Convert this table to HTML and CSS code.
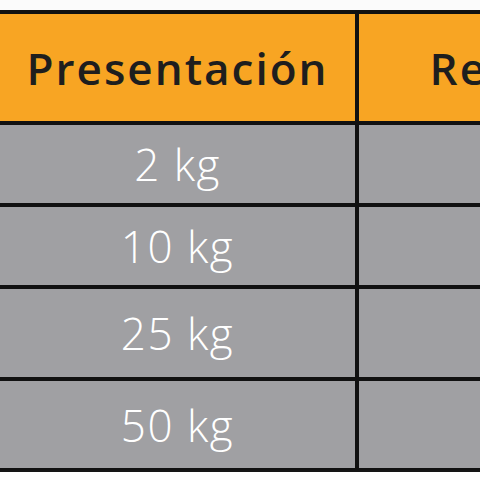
FILE: index.html
```html
<!DOCTYPE html>
<html lang="es">
<head>
<meta charset="utf-8">
<title>Presentación</title>
<link rel="stylesheet" href="styles.css">
</head>
<body>
<div class="table">
  <div class="cell head">Presentación</div>
  <div class="cell head">Rendimiento</div>
  <div class="cell body">2 kg</div>
  <div class="cell body"></div>
  <div class="cell body">10 kg</div>
  <div class="cell body"></div>
  <div class="cell body">25 kg</div>
  <div class="cell body"></div>
  <div class="cell body">50 kg</div>
  <div class="cell body"></div>
</div>
</body>
</html>
```
FILE: styles.css
```css
html, body {
  margin: 0;
  padding: 0;
  background: #fbfbfb;
  overflow: hidden;
}
body {
  padding-top: 10px;
  width: 480px;
  height: 480px;
  box-sizing: border-box;
}
.table {
  display: grid;
  grid-template-columns: 355px 436px;
  grid-template-rows: 107px 78px 78px 88px 87px;
  gap: 4px;
  padding: 4px 0 4px 0;
  background: #111111;
  width: 795px;
}
.cell {
  display: flex;
  align-items: center;
  justify-content: center;
  font-family: "Open Sans", "Noto Sans", sans-serif;
  white-space: nowrap;
}
.head {
  background: #f8a523;
  color: #1e1e1e;
  font-size: 44px;
  font-weight: 600;
  letter-spacing: 2px;
}
.body {
  background: #a0a0a3;
  color: #ffffff;
  font-size: 44px;
  font-weight: 300;
  letter-spacing: 1.5px;
}
```
